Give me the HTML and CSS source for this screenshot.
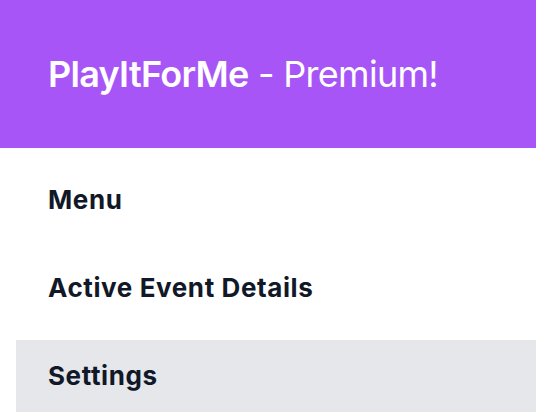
FILE: index.html
```html
<!DOCTYPE html>
<html lang="en">
<head>
<meta charset="utf-8">
<title>PlayItForMe - Premium!</title>
<link rel="stylesheet" href="styles.css">
</head>
<body>
  <header class="app-header">
    <h1 class="app-title"><span class="brand">PlayItForMe</span> - Premium!</h1>
  </header>
  <nav class="side-nav">
    <a class="nav-item" href="#">Menu</a>
    <a class="nav-item" href="#">Active Event Details</a>
    <a class="nav-item is-active" href="#">Settings</a>
  </nav>
</body>
</html>
```

FILE: styles.css
```css
* { box-sizing: border-box; }

html, body {
  margin: 0;
  padding: 0;
  background: #ffffff;
  font-family: Inter, "Noto Sans", "Liberation Sans", sans-serif;
}

.app-header {
  height: 148px;
  background: #a855f7;
  display: flex;
  align-items: center;
  padding: 0 48px;
}

.app-title {
  margin: 0;
  color: #ffffff;
  font-size: 36px;
  line-height: 40px;
  font-weight: 400;
  letter-spacing: -0.02em;
}

.brand {
  font-weight: 600;
}

.side-nav {
  display: flex;
  flex-direction: column;
  gap: 16px;
  padding: 16px 0 0 16px;
}

.nav-item {
  display: block;
  padding: 20px 32px;
  font-size: 26px;
  line-height: 32px;
  font-weight: 700;
  letter-spacing: 0.6px;
  color: #111827;
  text-decoration: none;
}

.nav-item.is-active {
  background: #e5e7eb;
}
```
